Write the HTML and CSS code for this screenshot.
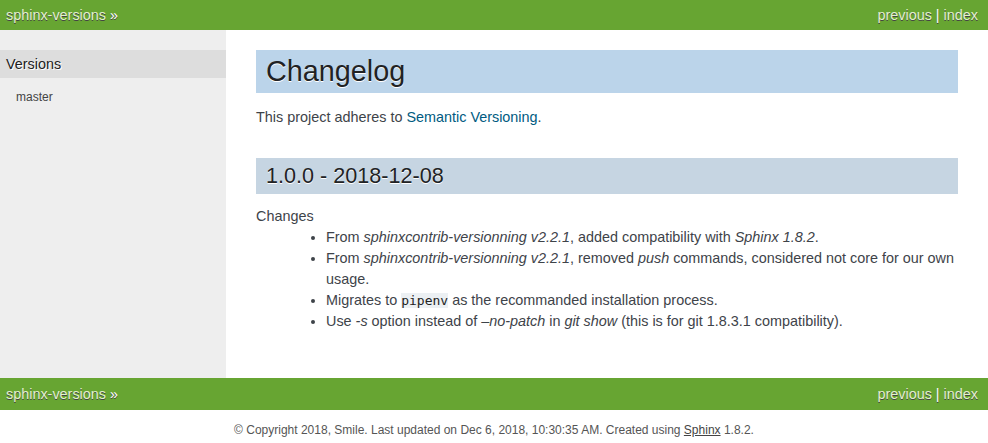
FILE: index.html
```html
<!DOCTYPE html>
<html>
<head>
<meta charset="utf-8">
<title>Changelog</title>
<link rel="stylesheet" href="styles.css">
</head>
<body>
<div class="related top">
  <ul class="rel-left"><li><a href="#">sphinx-versions</a> &raquo;</li></ul>
  <ul class="rel-right"><li><a href="#">previous</a> |</li><li><a href="#">index</a></li></ul>
</div>
<div class="document">
  <div class="sidebar">
    <h3>Versions</h3>
    <ul class="versions"><li><a href="#">master</a></li></ul>
  </div>
  <div class="body">
    <h1>Changelog</h1>
    <p>This project adheres to <a href="#">Semantic Versioning</a>.</p>
    <h2>1.0.0 - 2018-12-08</h2>
    <dl>
      <dt>Changes</dt>
      <dd>
        <ul class="changes">
          <li>From <em>sphinxcontrib-versionning v2.2.1</em>, added compatibility with <em>Sphinx 1.8.2</em>.</li>
          <li>From <em>sphinxcontrib-versionning v2.2.1</em>, removed <em>push</em> commands, considered not core for our own usage.</li>
          <li>Migrates to <code>pipenv</code> as the recommanded installation process.</li>
          <li>Use <em>-s</em> option instead of <em>–no-patch</em> in <em>git show</em> (this is for git 1.8.3.1 compatibility).</li>
        </ul>
      </dd>
    </dl>
  </div>
</div>
<div class="related bottom">
  <ul class="rel-left"><li><a href="#">sphinx-versions</a> &raquo;</li></ul>
  <ul class="rel-right"><li><a href="#">previous</a> |</li><li><a href="#">index</a></li></ul>
</div>
<div class="footer">&copy; Copyright 2018, Smile. Last updated on Dec 6, 2018, 10:30:35 AM. Created using <a href="#">Sphinx</a> 1.8.2.</div>
</body>
</html>
```
FILE: styles.css
```css
html, body {
  margin: 0;
  padding: 0;
}
body {
  font-family: "Liberation Sans", Arial, sans-serif;
  font-size: 16px;
  color: #555;
  background: #fff;
}
a {
  color: #005b81;
  text-decoration: none;
}
.related {
  background-color: #67a532;
  color: #fff;
  text-shadow: 0 1px 0 #444;
  font-size: 14.4px;
  display: flex;
  justify-content: space-between;
  padding: 0 10px 0 6px;
}
.related.top {
  line-height: 30px;
}
.related.bottom {
  line-height: 32px;
}
.related a {
  color: #e2f3cc;
}
.related ul {
  list-style: none;
  margin: 0;
  padding: 0;
  display: flex;
}
.rel-right li + li {
  margin-left: 4px;
}
.document {
  display: flex;
  background: #eee;
}
.sidebar {
  width: 226px;
  flex: none;
  padding: 20px 0;
  font-size: 12px;
  line-height: 18px;
}
.sidebar h3 {
  margin: 0;
  padding: 6px 6px;
  font-size: 14.4px;
  font-weight: normal;
  line-height: normal;
  color: #222;
  background: #ddd;
  text-shadow: 1px 1px 0 #fff;
}
.versions {
  list-style: none;
  margin: 10px 16px;
  padding: 0;
}
.versions a {
  color: #444;
}
.body {
  flex: 1;
  background: #fff;
  color: #3e4349;
  padding: 0 30px 31px 30px;
  font-size: 14.4px;
}
.body h1, .body h2 {
  font-weight: normal;
  color: #212224;
  margin: 29px 0 10px 0;
  padding: 5px 0 5px 10px;
  line-height: normal;
  text-shadow: 0 1px 0 #fff;
}
.body h1 {
  border-top: 20px solid #fff;
  margin-top: 0;
  font-size: 28.8px;
  background: #bbd4ea;
}
.body h2 {
  font-size: 21.6px;
  background: #c6d5e2;
}
.body p {
  line-height: 1.5em;
  margin: 14.4px 0;
}
.body dl {
  margin: 14.4px 0;
}
.body dd {
  margin-left: 30px;
  line-height: 21px;
}
.changes {
  margin: 3px 0 0 0;
  padding-left: 40px;
}
.changes li {
  line-height: 21px;
}
code {
  font-family: "DejaVu Sans Mono", monospace;
  font-size: 13px;
  background: #ecf0f3;
  color: #222;
}
.footer {
  color: #555;
  text-align: center;
  font-size: 12px;
  padding: 13px 0;
}
.footer a {
  color: #444;
  text-decoration: underline;
}
```
